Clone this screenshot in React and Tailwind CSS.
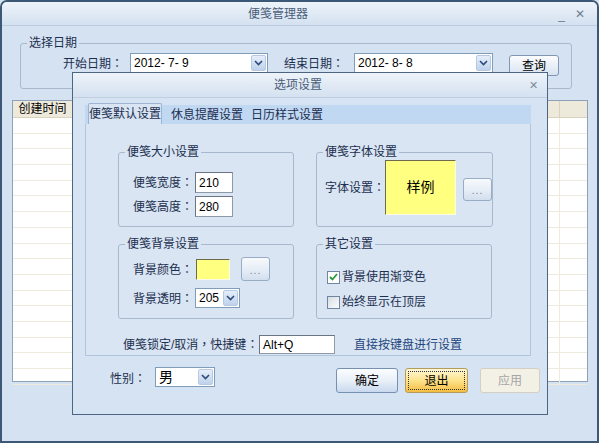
import React from "react";

const Chevron = () => (
  <svg width="9" height="6" viewBox="0 0 9 6">
    <path d="M1 1 L4.5 4.5 L8 1" fill="none" stroke="#2d4a78" strokeWidth="1.6" />
  </svg>
);

// full-width punctuation centred in its cell, as in the original UI font
const P = ({ children }) => <span className="font-['Noto_Sans_CJK_TC',sans-serif]">{children}</span>;

const Combo = ({ value, className, textClass }) => (
  <div className={`flex h-[20px] border border-[#7f9db9] bg-white ${className}`}>
    <div className={`flex flex-1 items-center pl-[3px] text-black ${textClass || "text-[12px]"}`}>{value}</div>
    <div className="m-[1px] flex w-[15px] items-center justify-center rounded-[2px] border border-[#b6c9e3] bg-gradient-to-b from-[#e6eefa] to-[#bfd2ec]">
      <Chevron />
    </div>
  </div>
);

const DotsButton = ({ className }) => (
  <div className={`flex items-center justify-center rounded-[3px] border border-[#98acc5] bg-gradient-to-b from-[#f7f9fc] via-[#e7eef7] to-[#d3dfee] pt-[3px] text-[10px] leading-none tracking-[1px] text-[#6d7f96] ${className}`}>
    ...
  </div>
);

const TextBox = ({ value, className }) => (
  <div className={`flex items-center border border-[#8e9aa8] border-t-[#6b7480] border-l-[#6b7480] bg-white pl-[3px] text-[12px] text-black ${className}`}>
    {value}
  </div>
);

const Group = ({ title, className, children }) => (
  <fieldset className={`rounded-[3px] border border-[#a8b9cd] ${className}`}>
    <legend className="ml-[6px] px-[2px] text-[12px] leading-[16px] text-[#1c2f4f]">{title}</legend>
    {children}
  </fieldset>
);

const Label = ({ children, className }) => (
  <span className={`shrink-0 whitespace-nowrap text-[12px] leading-[16px] text-[#1c2f4f] ${className || ""}`}>{children}</span>
);

export default function App() {
  const rows = Array.from({ length: 17 });
  return (
    <div className="relative h-[443px] w-[599px] overflow-hidden bg-[#d5e2f1] font-['Liberation_Sans','Noto_Sans_CJK_SC',sans-serif]">
      {/* main window */}
      <div className="flex h-[443px] w-[599px] flex-col rounded-t-[7px] border-2 border-[#3d5877] bg-[#d5e2f1]">
        <div className="flex h-[24px] shrink-0 items-center rounded-t-[5px] border-b border-[#bccce0] bg-gradient-to-b from-[#edf3fa] to-[#d4e1f0]">
          <span className="pl-[246px] text-[12px] text-[#4a5d78]">便笺管理器</span>
          <span className="ml-auto mr-[12px] flex items-center gap-[10px] text-[#6f7f94]">
            <span className="mt-[2px] text-[12px]">_</span>
            <span className="text-[12px]">✕</span>
          </span>
        </div>

        <Group title="选择日期" className="ml-[18px] mt-[9px] h-[54px] w-[552px]">
          <div className="flex items-start pl-[42px] pt-[2px]">
            <Label className="mt-[2px] w-[60px]">开始日期<P>：</P></Label>
            <Combo value="2012-  7-  9" className="ml-[7px] w-[138px]" />
            <Label className="ml-[16px] mt-[2px] w-[60px]">结束日期<P>：</P></Label>
            <Combo value="2012-  8-  8" className="ml-[10px] w-[139px]" />
            <div className="ml-[16px] mt-[2px] flex h-[21px] w-[50px] items-center justify-center rounded-[3px] border border-[#8197b1] bg-gradient-to-b from-[#fbfcfe] to-[#d8e3f1] text-[12px] text-black">
              查询
            </div>
          </div>
        </Group>

        <div className="ml-[10px] mt-[11px] h-[282px] w-[576px] border border-[#8ea1b8] bg-white">
          <div className="flex h-[17px] border-b border-[#d8d2bf] bg-[#eeeadb]">
            <div className="flex w-[60px] items-center justify-center border-r border-[#d8d2bf] text-[12px] text-black">创建时间</div>
            <div className="ml-auto w-[28px] border-l border-[#d8d2bf]" />
          </div>
          {rows.map((_, i) => (
            <div key={i} className="flex h-[15.7px] border-b border-[#eeeadc]">
              <div className="w-[60px]" />
              <div className="ml-auto w-[28px] border-l border-[#eeeadc]" />
            </div>
          ))}
        </div>
      </div>

      {/* dialog */}
      <div className="absolute left-[72px] top-[72px] flex h-[343px] w-[476px] flex-col border border-[#4d6580] bg-[#d6e3f2]">
        <div className="flex h-[25px] shrink-0 items-center border-b border-[#c0cee0] bg-gradient-to-b from-[#edf3fa] to-[#d4e1f0]">
          <span className="pl-[201px] text-[12px] text-[#4a5d78]">选项设置</span>
          <span className="ml-auto mr-[9px] text-[11px] text-[#7d8a9b]">✕</span>
        </div>

        <div className="ml-[12px] mt-[5px] flex h-[21px] w-[446px] items-end">
          <div className="flex h-[19px] w-full items-end bg-[#c1d8f3] pl-[3px]">
            <div className="-mt-[2px] flex h-[21px] w-[74px] items-center justify-center rounded-t-[2px] border border-b-0 border-[#9db4d0] bg-[#d9e5f3] text-[12px] text-[#1c2f4f]">
              便笺默认设置
            </div>
            <div className="ml-[9px] flex h-[19px] items-center text-[12px] text-[#1c2f4f]">休息提醒设置</div>
            <div className="ml-[8px] flex h-[19px] items-center text-[12px] text-[#1c2f4f]">日历样式设置</div>
          </div>
        </div>

        <div className="ml-[12px] flex h-[232px] w-[446px] flex-col border border-t-0 border-[#b3c5db] bg-[#d9e5f3] pt-[20px]">
          <div className="ml-[32px] grid grid-cols-[176px_176px] gap-x-[22px] gap-y-[9px]">
            <Group title="便笺大小设置" className="h-[83px]">
              <div className="flex flex-col gap-[3px] pl-[14px] pt-[12px]">
                <div className="flex items-center">
                  <Label className="w-[60px]">便笺宽度<P>：</P></Label>
                  <TextBox value="210" className="ml-[2px] h-[21px] w-[38px]" />
                </div>
                <div className="flex items-center">
                  <Label className="w-[60px]">便笺高度<P>：</P></Label>
                  <TextBox value="280" className="ml-[2px] h-[21px] w-[38px]" />
                </div>
              </div>
            </Group>

            <Group title="便笺字体设置" className="h-[83px]">
              <div className="flex items-center pl-[8px]">
                <Label className="w-[60px]">字体设置<P>：</P></Label>
                <div className="flex h-[55px] w-[71px] items-center justify-center border border-[#fbfbe6] border-l-[#6e6b4c] border-t-[#6e6b4c] bg-[#ffff80] text-[14px] text-black">
                  样例
                </div>
                <DotsButton className="ml-[7px] mt-[3px] h-[23px] w-[29px]" />
              </div>
            </Group>

            <Group title="便笺背景设置" className="h-[83px]">
              <div className="flex flex-col pl-[14px] pt-[5px]">
                <div className="flex items-center">
                  <Label className="w-[60px]">背景颜色<P>：</P></Label>
                  <div className="ml-[3px] h-[21px] w-[34px] border border-[#fbfbe6] border-l-[#6e6b4c] border-t-[#6e6b4c] bg-[#ffff80]" />
                  <DotsButton className="ml-[11px] h-[24px] w-[29px]" />
                </div>
                <div className="mt-[7px] flex items-center">
                  <Label className="w-[60px]">背景透明<P>：</P></Label>
                  <Combo value="205" className="ml-[2px] w-[45px]" />
                </div>
              </div>
            </Group>

            <Group title="其它设置" className="h-[83px]">
              <div className="flex flex-col gap-[9px] pl-[10px] pt-[17px]">
                <div className="flex h-[16px] items-center">
                  <div className="flex h-[13px] w-[13px] items-center justify-center border border-[#6f86a3] bg-white">
                    <svg width="9" height="8" viewBox="0 0 9 8">
                      <path d="M1 4 L3.5 6.5 L8 1" fill="none" stroke="#2f9a3a" strokeWidth="1.8" />
                    </svg>
                  </div>
                  <Label className="ml-[2px]">背景使用渐变色</Label>
                </div>
                <div className="flex h-[16px] items-center">
                  <div className="h-[13px] w-[13px] border border-[#6f86a3] bg-gradient-to-br from-[#d8dde4] to-[#fbfcfd]" />
                  <Label className="ml-[2px]">始终显示在顶层</Label>
                </div>
              </div>
            </Group>
          </div>

          <div className="ml-[37px] mt-[16px] flex items-center">
            <Label className="w-[136px]">便笺锁定/取消<P>，</P>快捷键<P>：</P></Label>
            <TextBox value="Alt+Q" className="h-[19px] w-[76px]" />
            <span className="ml-[19px] text-[12px] text-[#24467c]">直接按键盘进行设置</span>
          </div>
        </div>

        <div className="ml-[37px] mt-[12px] flex items-start">
          <Label className="mt-[2px] w-[36px]">性别<P>：</P></Label>
          <Combo value="男" className="-mt-[1px] ml-[9px] w-[60px]" textClass="text-[14px]" />
          <div className="ml-[121px] flex h-[25px] w-[62px] items-center justify-center rounded-[3px] border border-[#7590b0] bg-gradient-to-b from-[#fbfdff] via-[#e9f0f8] to-[#c9d9ee] text-[12px] text-black">
            确定
          </div>
          <div className="ml-[7px] flex h-[25px] w-[63px] items-center justify-center rounded-[3px] border border-[#b69b5a] bg-gradient-to-b from-[#fff8d8] via-[#fde38a] to-[#f3bd3c] p-[2px] text-[12px] text-black">
            <div className="flex h-full w-full items-center justify-center border border-dotted border-[#333]">退出</div>
          </div>
          <div className="ml-[12px] flex h-[25px] w-[60px] items-center justify-center rounded-[3px] border border-[#d3d0c3] bg-[#f3f0e6] text-[12px] text-[#a6a6a6]">
            应用
          </div>
        </div>
      </div>
    </div>
  );
}
